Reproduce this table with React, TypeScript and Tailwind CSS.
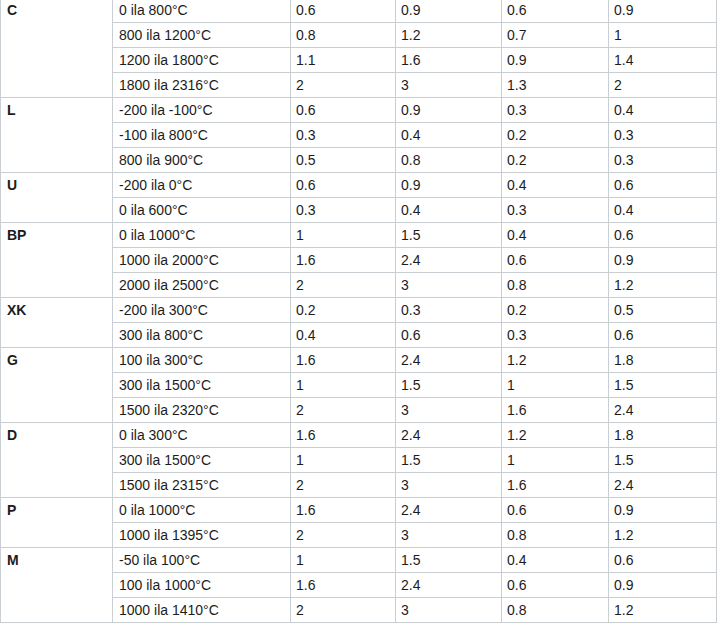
const groups: { name: string; rows: string[][] }[] = [
  {
    name: "C",
    rows: [
      ["0 ila 800°C", "0.6", "0.9", "0.6", "0.9"],
      ["800 ila 1200°C", "0.8", "1.2", "0.7", "1"],
      ["1200 ila 1800°C", "1.1", "1.6", "0.9", "1.4"],
      ["1800 ila 2316°C", "2", "3", "1.3", "2"],
    ],
  },
  {
    name: "L",
    rows: [
      ["-200 ila -100°C", "0.6", "0.9", "0.3", "0.4"],
      ["-100 ila 800°C", "0.3", "0.4", "0.2", "0.3"],
      ["800 ila 900°C", "0.5", "0.8", "0.2", "0.3"],
    ],
  },
  {
    name: "U",
    rows: [
      ["-200 ila 0°C", "0.6", "0.9", "0.4", "0.6"],
      ["0 ila 600°C", "0.3", "0.4", "0.3", "0.4"],
    ],
  },
  {
    name: "BP",
    rows: [
      ["0 ila 1000°C", "1", "1.5", "0.4", "0.6"],
      ["1000 ila 2000°C", "1.6", "2.4", "0.6", "0.9"],
      ["2000 ila 2500°C", "2", "3", "0.8", "1.2"],
    ],
  },
  {
    name: "XK",
    rows: [
      ["-200 ila 300°C", "0.2", "0.3", "0.2", "0.5"],
      ["300 ila 800°C", "0.4", "0.6", "0.3", "0.6"],
    ],
  },
  {
    name: "G",
    rows: [
      ["100 ila 300°C", "1.6", "2.4", "1.2", "1.8"],
      ["300 ila 1500°C", "1", "1.5", "1", "1.5"],
      ["1500 ila 2320°C", "2", "3", "1.6", "2.4"],
    ],
  },
  {
    name: "D",
    rows: [
      ["0 ila 300°C", "1.6", "2.4", "1.2", "1.8"],
      ["300 ila 1500°C", "1", "1.5", "1", "1.5"],
      ["1500 ila 2315°C", "2", "3", "1.6", "2.4"],
    ],
  },
  {
    name: "P",
    rows: [
      ["0 ila 1000°C", "1.6", "2.4", "0.6", "0.9"],
      ["1000 ila 1395°C", "2", "3", "0.8", "1.2"],
    ],
  },
  {
    name: "M",
    rows: [
      ["-50 ila 100°C", "1", "1.5", "0.4", "0.6"],
      ["100 ila 1000°C", "1.6", "2.4", "0.6", "0.9"],
      ["1000 ila 1410°C", "2", "3", "0.8", "1.2"],
    ],
  },
];

export default function App() {
  return (
    <div className="bg-white w-[719px] h-[626px] overflow-hidden font-['Liberation_Sans',Arial,sans-serif] text-[14px] text-[#1c1c1c]">
      <table className="-mt-[3px] table-fixed border-collapse w-[716px]">
        <colgroup>
          <col className="w-[112px]" />
          <col className="w-[178px]" />
          <col className="w-[105px]" />
          <col className="w-[106px]" />
          <col className="w-[107px]" />
          <col className="w-[108px]" />
        </colgroup>
        <tbody>
          {groups.map((g) =>
            g.rows.map((r, i) => (
              <tr key={g.name + i} className="h-[25px]">
                {i === 0 && (
                  <td
                    rowSpan={g.rows.length}
                    className="border border-[#c9ced3] align-top font-bold pl-[6px] pt-[3px] leading-[18px]"
                  >
                    {g.name}
                  </td>
                )}
                {r.map((c, j) => (
                  <td
                    key={j}
                    className={`border border-[#c9ced3] leading-[18px] p-0 ${j === 0 ? "pl-[6px]" : "pl-[5px]"}`}
                  >
                    {c}
                  </td>
                ))}
              </tr>
            ))
          )}
        </tbody>
      </table>
    </div>
  );
}
